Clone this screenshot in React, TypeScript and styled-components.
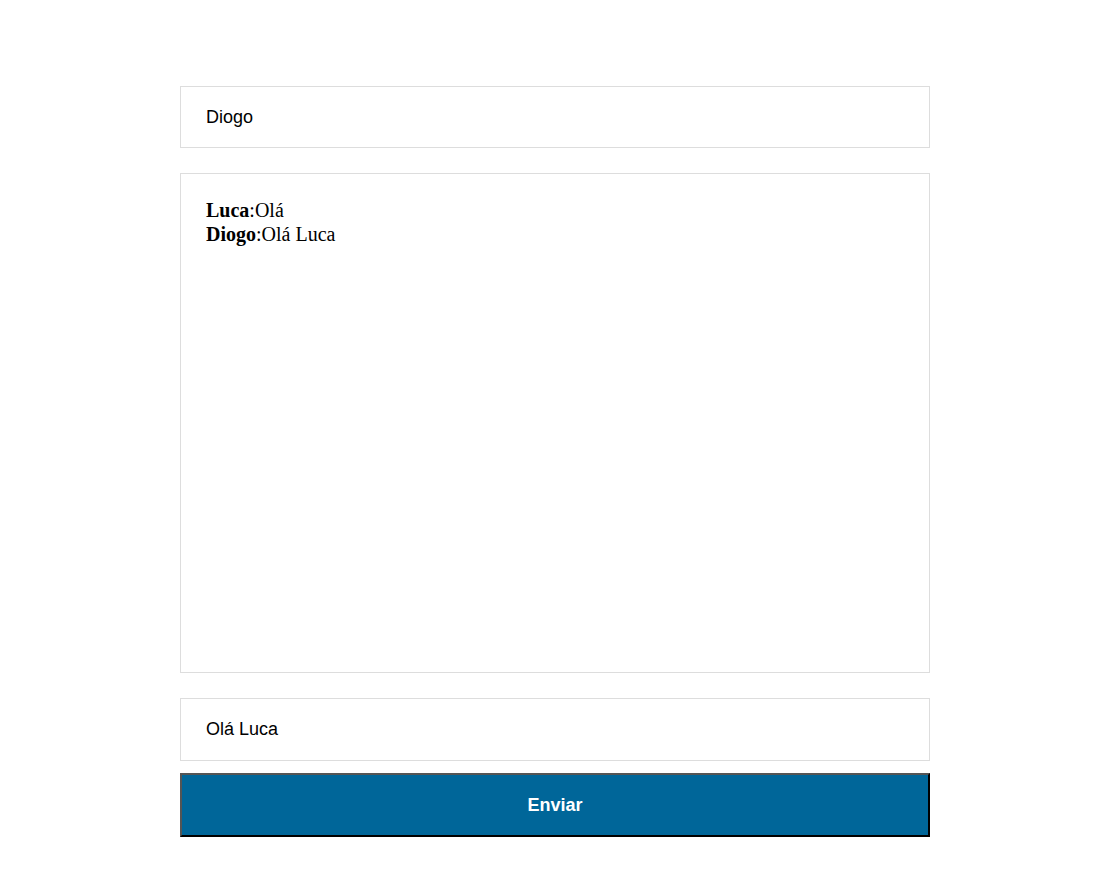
import React, { useState } from 'react';
import styled, { createGlobalStyle } from 'styled-components';

const GlobalStyle = createGlobalStyle`
  body {
    margin: 0;
    background: #ffffff;
    font-family: 'Liberation Serif', serif;
  }
`;

const Page = styled.div`
  padding: 86px 0 0 180px;
`;

const Chat = styled.form`
  width: 750px;
  display: flex;
  flex-direction: column;
`;

const Field = styled.input<{ $gap: number; $height: number }>`
  box-sizing: border-box;
  width: 100%;
  height: ${(p) => p.$height}px;
  padding: 0 25px;
  margin-bottom: ${(p) => p.$gap}px;
  border: 1px solid #dddddd;
  outline: none;
  font-family: 'Liberation Sans', Arial, sans-serif;
  font-size: 18px;
  color: #000;
  background: #fff;
`;

const Messages = styled.div`
  box-sizing: border-box;
  width: 100%;
  height: 500px;
  padding: 24px 25px 25px;
  margin-bottom: 25px;
  border: 1px solid #dddddd;
  font-family: 'Liberation Serif', 'Times New Roman', serif;
  font-size: 20px;
  line-height: 24px;
  color: #000;
`;

const Line = styled.div`
  strong {
    font-weight: bold;
  }
`;

const SendButton = styled.button`
  box-sizing: border-box;
  width: 100%;
  height: 64px;
  border-width: 2px;
  border-style: solid;
  border-color: #555555 #000000 #000000 #555555;
  background: #006699;
  color: #ffffff;
  font-family: 'Liberation Sans', Arial, sans-serif;
  font-size: 18px;
  font-weight: bold;
  cursor: pointer;
`;

type Msg = { author: string; text: string };

export default function App() {
  const [name, setName] = useState('Diogo');
  const [text, setText] = useState('Olá Luca');
  const [messages] = useState<Msg[]>([
    { author: 'Luca', text: 'Olá' },
    { author: 'Diogo', text: 'Olá Luca' },
  ]);

  return (
    <Page>
      <GlobalStyle />
      <Chat onSubmit={(e) => e.preventDefault()}>
        <Field $gap={25} $height={62} value={name} onChange={(e) => setName(e.target.value)} />
        <Messages>
          {messages.map((m, i) => (
            <Line key={i}>
              <strong>{m.author}</strong>:{m.text}
            </Line>
          ))}
        </Messages>
        <Field $gap={12} $height={63} value={text} onChange={(e) => setText(e.target.value)} />
        <SendButton type="submit">Enviar</SendButton>
      </Chat>
    </Page>
  );
}
